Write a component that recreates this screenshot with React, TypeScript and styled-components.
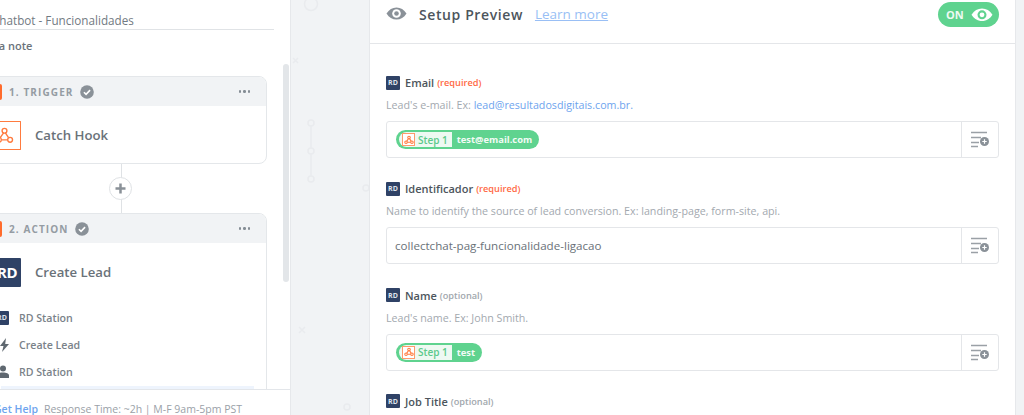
import React from "react";
import styled, { createGlobalStyle } from "styled-components";

const Global = createGlobalStyle`
  html, body { margin: 0; padding: 0; height: 100%; overflow: hidden; background: #f1f3f5; }
  #root { height: 100%; }
  * { box-sizing: border-box; }
`;

const Page = styled.div`
  width: 1024px; height: 415px; display: flex; overflow: hidden;
  font-family: "Open Sans", "Liberation Sans", sans-serif; background: #f1f3f5;
`;
const LeftPanel = styled.aside`
  width: 291px; height: 415px; flex: none; background: #fff; border-right: 1px solid #e6e8eb;
  position: relative; display: flex; flex-direction: column; overflow: hidden;
`;
const LeftScroll = styled.div`
  flex: 1; min-height: 0; overflow: hidden; margin-left: -26px; width: 300px; padding-top: 12px;
`;
const ZapTitle = styled.div`
  font-size: 11.7px; line-height: 17px; color: #727a82; height: 18px;
  border-bottom: 1px solid #e0e3e6; white-space: nowrap; padding-left: 18px; padding-bottom: 1px;
`;
const NoteLink = styled.div`
  font-size: 11px; font-weight: 600; line-height: 14px; color: #6b737b; margin-top: 9px; padding-left: 1px;
`;
const Card = styled.section<{ $grow?: boolean }>`
  border: 1px solid #e4e7ea; border-radius: 8px; background: #fff; overflow: hidden;
  ${p => (p.$grow ? "height: 240px; border-radius: 8px 8px 0 0;" : "height: 88px;")}
`;
const CardHead = styled.div`
  height: 29px; background: #f1f3f5; display: flex; align-items: center; padding-left: 8px; padding-right: 16px;
`;
const Flag = styled.span`
  width: 27px; height: 16px; background: #ff6b2c; border-radius: 2px; margin-left: -8px; margin-right: 7px; flex: none;
`;
const StepName = styled.span`
  font-size: 10px; font-weight: 700; letter-spacing: 1.1px; color: #959ca3; white-space: nowrap; margin-right: 6px;
`;
const More = styled.span`
  margin-left: auto; display: flex; gap: 2px;
  i { width: 2.5px; height: 2.5px; border-radius: 50%; background: #858d95; display: block; }
`;
const CardMain = styled.div`
  display: flex; align-items: center; height: 58px;
`;
const CardTitle = styled.div`
  font-size: 13.2px; font-weight: 600; color: #6a7279; margin-left: 14px; white-space: nowrap;
`;
const HookBox = styled.div`
  width: 46px; height: 29px; flex: none; border: 1px solid #ff7b3f; border-left: none; background: #fff;
  display: flex; align-items: center; justify-content: flex-end; padding-right: 6px; border-radius: 0 1px 1px 0;
`;
const RdBig = styled.div`
  width: 46px; height: 29px; flex: none; background: #2f4266; color: #fff; font-size: 15px; font-weight: 700;
  display: flex; align-items: center; justify-content: flex-end; padding-right: 4px; border-radius: 1px; letter-spacing: -0.5px;
`;
const Connector = styled.div`
  height: 49px; display: flex; align-items: center; justify-content: center; position: relative; width: 292px; padding-right: 3px;
  &::before { content: ""; position: absolute; top: 0; bottom: 0; left: 147px; width: 1px; background: #dfe2e5; }
`;
const PlusCircle = styled.div`
  width: 23px; height: 23px; border-radius: 50%; background: #fff; border: 1px solid #dfe2e5; position: relative;
  display: flex; align-items: center; justify-content: center; left: 2px;
`;
const Cards = styled.div`
  margin-top: 23px; width: 293px;
`;
const Details = styled.div`
  display: flex; flex-direction: column; margin-top: 3px; padding-left: 25px;
`;
const DetailRow = styled.div`
  display: flex; align-items: center; height: 27px; font-size: 10.6px; font-weight: 600; color: #7a8289; gap: 10px; white-space: nowrap;
`;
const DetailIcon = styled.span`
  width: 9px; height: 14px; display: flex; align-items: center; justify-content: flex-end; flex: none; color: #5f6870;
`;
const RdSmall = styled.span`
  width: 14px; height: 14px; flex: none; background: #2f4266; color: #dfe4ec; font-size: 7px; font-weight: 700;
  display: flex; align-items: center; justify-content: center; border-radius: 1px;
`;
const RdClip = styled(RdSmall)`
  margin-left: -5px;
`;
const Highlight = styled.div`
  height: 8px; background: #eef4fd; margin: 1px 0 0 26px; width: 253px;
`;
const ScrollThumb = styled.div`
  position: absolute; left: 283px; top: 64px; width: 6px; height: 218px; background: #e3e6e9; border-radius: 3px;
`;
const Footer = styled.footer`
  position: absolute; left: 0; right: 0; bottom: 0; height: 26px; background: #fff; border-top: 1px solid #e3e6ea;
  font-size: 10.5px; line-height: 14px; padding-top: 12px; color: #9aa1a8; white-space: nowrap; text-indent: -6px;
  b { color: #6ea4ee; font-weight: 600; margin-right: 6px; }
`;
const Gutter = styled.div`
  width: 78px; flex: none; position: relative; background: #f1f3f5;
`;
const GutterArt = styled.svg`
  position: absolute; left: 0; top: 0; display: block;
`;
const RightPanel = styled.main`
  width: 647px; flex: none; height: 415px; background: #fff; border-left: 1px solid #e6e8eb; border-right: 1px solid #e6e8eb;
  overflow: hidden;
`;
const Header = styled.header`
  height: 44px; border-bottom: 1px solid #e4e6e9; padding: 0 16px 15px; display: flex; align-items: center;
`;
const HeadTitle = styled.h1`
  margin: 0 0 0 12px; font-size: 14px; font-weight: 600; color: #4d555c; letter-spacing: 0.6px; white-space: nowrap;
`;
const Learn = styled.a`
  margin-left: 12px; font-size: 13.5px; color: #99bff5; text-decoration: underline; white-space: nowrap;
`;
const Toggle = styled.div`
  margin-left: auto; width: 61px; height: 25px; border-radius: 13px; background: #5fd38f; color: #eefaf3;
  display: flex; align-items: center; padding-left: 8px; gap: 7px; font-size: 11px; font-weight: 700; position: relative; top: 0.5px;
`;
const Form = styled.div`
  padding: 31px 16px 0;
`;
const Field = styled.div`
  margin-bottom: 23.33px;
`;
const LabelRow = styled.div`
  display: flex; align-items: center; height: 15px; white-space: nowrap;
`;
const Label = styled.span`
  font-size: 11px; font-weight: 600; color: #4d555c; margin-left: 5px;
`;
const Tag = styled.span<{ $req?: boolean }>`
  font-size: 9.2px; font-weight: 600; margin-left: 3px; color: ${p => (p.$req ? "#ff6a45" : "#a1a7ad")};
`;
const Desc = styled.div`
  font-size: 10.7px; line-height: 14px; color: #a3a9af; margin-top: 8px; white-space: nowrap;
  a { color: #6ea4ee; }
`;
const InputRow = styled.div`
  margin-top: 9px; height: 37px; border: 1px solid #e4e6e9; border-radius: 3px; display: flex; width: 613px; background: #fff;
`;
const InputValue = styled.div`
  flex: 1; display: flex; align-items: center; padding-left: 8px; font-size: 11.6px; color: #6a7279; white-space: nowrap;
`;
const AddBtn = styled.div`
  width: 37px; flex: none; border-left: 1px solid #e4e6e9; display: flex; align-items: center; justify-content: center;
`;
const Pill = styled.div`
  height: 19px; border-radius: 10px; background: #5fd38f; display: flex; align-items: center; padding: 0 7px 0 3px;
  color: #f3fbf6; font-size: 9.4px; font-weight: 700; margin-left: 1px;
`;
const PillStep = styled.span`
  height: 15px; background: #eef9f2; color: #5cc98a; font-size: 10px; font-weight: 600; display: flex; align-items: center;
  padding: 0 4px 0 3px; gap: 3px; margin-right: 5px; border-radius: 8px 0 0 8px;
`;
const HookMini = styled.span`
  width: 13px; height: 13px; border: 1px solid #ff9a6c; display: flex; align-items: center; justify-content: center; background: #fff;
`;

const Eye = ({ size = 21, color = "#8a9198", pupil = "#fff" }: { size?: number; color?: string; pupil?: string }) => (
  <svg width={size} height={size * 0.62} viewBox="0 0 21 13" fill="none">
    <path d="M0.5 6.5C3 2.5 6.4 0.5 10.5 0.5s7.5 2 10 6c-2.5 4-5.9 6-10 6s-7.5-2-10-6z" fill={color} />
    <circle cx="10.5" cy="6.5" r="4.3" fill={pupil} />
    <circle cx="10.5" cy="6.5" r="2.3" fill={color} />
  </svg>
);
const Check = () => (
  <svg width="14" height="14" viewBox="0 0 15 15">
    <circle cx="7.5" cy="7.5" r="7.3" fill="#8a9198" />
    <path d="M4.2 7.7l2.3 2.3 4.3-4.5" fill="none" stroke="#fff" strokeWidth="1.7" />
  </svg>
);
const Hook = ({ size = 19, color = "#ff7b3f", sw = 1.6 }: { size?: number; color?: string; sw?: number }) => (
  <svg width={size} height={size} viewBox="0 0 22 22" fill="none" stroke={color} strokeWidth={sw}>
    <circle cx="11" cy="5.5" r="2.8" />
    <circle cx="4.5" cy="16" r="2.8" />
    <circle cx="17.5" cy="16" r="2.8" />
    <path d="M10 8l-4 5.5M7.5 16h7M12 8l3.7 5.5" />
  </svg>
);
const AddList = () => (
  <svg width="20" height="17" viewBox="0 0 20 17">
    <path d="M1 1.5h16M1 6.5h10M1 11.5h8M1 15.5h7" stroke="#9aa0a6" strokeWidth="1.7" />
    <circle cx="14.5" cy="10.5" r="4.5" fill="#8a9198" />
    <path d="M12.3 10.5h4.4M14.5 8.3v4.4" stroke="#fff" strokeWidth="1.2" />
  </svg>
);

const Dots = () => <More><i /><i /><i /></More>;

const StepPill = ({ value }: { value: string }) => (
  <Pill>
    <PillStep><HookMini><Hook size={10} sw={2.4} /></HookMini>Step 1</PillStep>
    {value}
  </Pill>
);

const FormField = ({ label, req, desc, children }: { label: string; req?: boolean; desc?: React.ReactNode; children?: React.ReactNode }) => (
  <Field>
    <LabelRow>
      <RdSmall>RD</RdSmall>
      <Label>{label}</Label>
      <Tag $req={req}>{req ? "(required)" : "(optional)"}</Tag>
    </LabelRow>
    {desc && <Desc>{desc}</Desc>}
    {children && (
      <InputRow>
        <InputValue>{children}</InputValue>
        <AddBtn><AddList /></AddBtn>
      </InputRow>
    )}
  </Field>
);

export default function App() {
  return (
    <Page>
      <Global />
      <LeftPanel>
        <LeftScroll>
          <ZapTitle>Chatbot - Funcionalidades</ZapTitle>
          <NoteLink>Add a note</NoteLink>
          <Cards>
            <Card>
              <CardHead><Flag /><StepName>1. TRIGGER</StepName><Check /><Dots /></CardHead>
              <CardMain>
                <HookBox><Hook /></HookBox>
                <CardTitle>Catch Hook</CardTitle>
              </CardMain>
            </Card>
            <Connector>
              <PlusCircle>
                <svg width="11" height="11" viewBox="0 0 11 11"><path d="M5.5 0.5v10M0.5 5.5h10" stroke="#8a9198" strokeWidth="2.5" /></svg>
              </PlusCircle>
            </Connector>
            <Card $grow>
              <CardHead><Flag /><StepName>2. ACTION</StepName><Check /><Dots /></CardHead>
              <CardMain>
                <RdBig>RD</RdBig>
                <CardTitle>Create Lead</CardTitle>
              </CardMain>
              <Details>
                <DetailRow><RdClip>RD</RdClip><span>RD Station</span></DetailRow>
                <DetailRow>
                  <DetailIcon><svg width="9" height="14" viewBox="0 0 9 14"><path d="M6 0L0 8h3.5L2 14l7-8H5.2z" fill="currentColor" /></svg></DetailIcon>
                  <span>Create Lead</span>
                </DetailRow>
                <DetailRow>
                  <DetailIcon><svg width="12" height="13" viewBox="0 0 12 13" style={{ flex: "none" }}><circle cx="6" cy="3.5" r="3" fill="currentColor" /><path d="M0 13v-2.5C0 8.5 2.5 7.5 6 7.5s6 1 6 3V13z" fill="currentColor" /></svg></DetailIcon>
                  <span>RD Station</span>
                </DetailRow>
              </Details>
              <Highlight />
            </Card>
          </Cards>
        </LeftScroll>
        <ScrollThumb />
        <Footer><b>Get Help</b>Response Time: ~2h | M-F 9am-5pm PST</Footer>
      </LeftPanel>
      <Gutter>
        <GutterArt width="78" height="415" viewBox="0 0 78 415" fill="none" stroke="#e9ebee" strokeWidth="1.5">
          <circle cx="20" cy="4" r="6.5" />
          <path d="M2 58l5 5M7 58l-5 5M8 327l6 6M14 327l-6 6" />
          <circle cx="20" cy="123" r="3" />
          <circle cx="20" cy="151" r="3" />
          <circle cx="20" cy="179" r="3" />
          <path d="M20 126v22M20 154v22" />
          <circle cx="75" cy="188" r="3" />
          <circle cx="56" cy="407" r="3" />
        </GutterArt>
      </Gutter>
      <RightPanel>
        <Header>
          <Eye />
          <HeadTitle>Setup Preview</HeadTitle>
          <Learn>Learn more</Learn>
          <Toggle>ON<Eye size={22} color="#fff" pupil="#5fd38f" /></Toggle>
        </Header>
        <Form>
          <FormField label="Email" req desc={<>Lead's e-mail. Ex: <a>lead@resultadosdigitais.com.br.</a></>}>
            <StepPill value="test@email.com" />
          </FormField>
          <FormField label="Identificador" req desc="Name to identify the source of lead conversion. Ex: landing-page, form-site, api.">
            collectchat-pag-funcionalidade-ligacao
          </FormField>
          <FormField label="Name" desc="Lead's name. Ex: John Smith.">
            <StepPill value="test" />
          </FormField>
          <FormField label="Job Title" />
        </Form>
      </RightPanel>
    </Page>
  );
}
